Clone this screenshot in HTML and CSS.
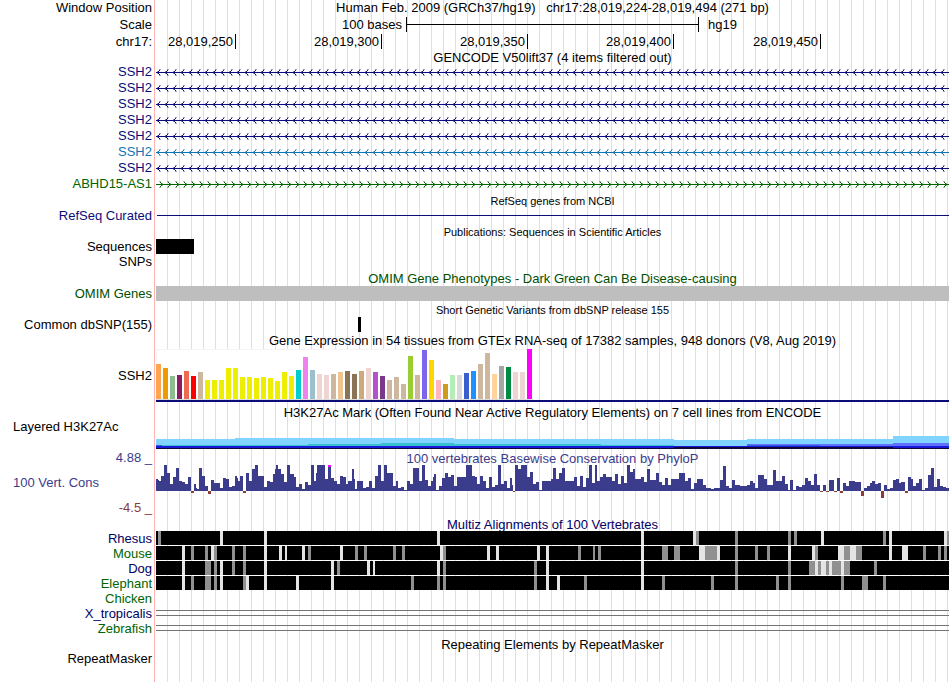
FILE: index.html
```html
<!DOCTYPE html>
<html lang="en">
<head>
<meta charset="utf-8">
<title>Human chr17:28,019,224-28,019,494 genome browser</title>
<link rel="stylesheet" href="styles.css">
</head>
<body>
<svg class="defs" aria-hidden="true">
  <defs>
    <pattern id="minus" width="8" height="16" patternUnits="userSpaceOnUse">
      <path class="strand" d="M0 8h8v1h-8zM2 7h1v1h-1zM2 9h1v1h-1zM3 6h1v1h-1zM3 10h1v1h-1z"/>
      <path class="strand soft" d="M3 5h2v1h-2zM3 11h2v1h-2zM1 7h1v1h-1zM1 9h1v1h-1z"/>
    </pattern>
    <pattern id="minus-alt" width="8" height="16" patternUnits="userSpaceOnUse">
      <path class="strand alt" d="M0 8h8v1h-8zM2 7h1v1h-1zM2 9h1v1h-1zM3 6h1v1h-1zM3 10h1v1h-1z"/>
      <path class="strand alt soft" d="M3 5h2v1h-2zM3 11h2v1h-2zM1 7h1v1h-1zM1 9h1v1h-1z"/>
    </pattern>
    <pattern id="plus" width="8" height="16" patternUnits="userSpaceOnUse">
      <path class="strand green" d="M0 8h8v1h-8zM5 7h1v1h-1zM5 9h1v1h-1zM4 6h1v1h-1zM4 10h1v1h-1z"/>
      <path class="strand green soft" d="M3 5h2v1h-2zM3 11h2v1h-2zM6 7h1v1h-1zM6 9h1v1h-1z"/>
    </pattern>
  </defs>
</svg>
<main class="browser">
  <header class="ruler">
    <div class="row"><div class="label">Window Position</div><h1 class="title">Human Feb. 2009 (GRCh37/hg19)&nbsp;&nbsp; chr17:28,019,224-28,019,494 (271 bp)</h1></div>
    <div class="row"><div class="label">Scale</div>
      <div class="scale"><span class="scale-name">100 bases</span><span class="scale-bar"></span><span class="scale-db">hg19</span></div></div>
    <div class="row"><div class="label">chr17:</div>
      <div class="ticks"><span>28,019,250</span><span>28,019,300</span><span>28,019,350</span><span>28,019,400</span><span>28,019,450</span></div></div>
  </header>

  <section>
    <h2 class="title tight">GENCODE V50lift37 (4 items filtered out)</h2>
    <div class="row navy"><div class="label">SSH2</div><svg class="gene"><rect width="100%" height="16" fill="url(#minus)"/></svg></div>
    <div class="row navy"><div class="label">SSH2</div><svg class="gene"><rect width="100%" height="16" fill="url(#minus)"/></svg></div>
    <div class="row navy"><div class="label">SSH2</div><svg class="gene"><rect width="100%" height="16" fill="url(#minus)"/></svg></div>
    <div class="row navy"><div class="label">SSH2</div><svg class="gene"><rect width="100%" height="16" fill="url(#minus)"/></svg></div>
    <div class="row navy"><div class="label">SSH2</div><svg class="gene"><rect width="100%" height="16" fill="url(#minus)"/></svg></div>
    <div class="row azure"><div class="label">SSH2</div><svg class="gene"><rect width="100%" height="16" fill="url(#minus-alt)"/></svg></div>
    <div class="row navy"><div class="label">SSH2</div><svg class="gene"><rect width="100%" height="16" fill="url(#minus)"/></svg></div>
    <div class="row leaf"><div class="label">ABHD15-AS1</div><svg class="gene"><rect width="100%" height="16" fill="url(#plus)"/></svg></div>
  </section>

  <section>
    <h2 class="title small">RefSeq genes from NCBI</h2>
    <div class="row item navy"><div class="label">RefSeq Curated</div><div class="intron"></div></div>
  </section>

  <section>
    <h2 class="title small">Publications: Sequences in Scientific Articles</h2>
    <div class="row item"><div class="label">Sequences</div><svg class="chart" viewBox="0 0 793 15" preserveAspectRatio="none"><rect width="38" height="15"/></svg></div>
    <div class="row"><div class="label">SNPs</div></div>
  </section>

  <section>
    <h2 class="title forest">OMIM Gene Phenotypes - Dark Green Can Be Disease-causing</h2>
    <div class="row item forest"><div class="label">OMIM Genes</div><div class="omim"></div></div>
  </section>

  <section>
    <h2 class="title small">Short Genetic Variants from dbSNP release 155</h2>
    <div class="row item"><div class="label">Common dbSNP(155)</div><svg class="chart" viewBox="0 0 793 15" preserveAspectRatio="none"><rect x="202" width="3" height="15"/></svg></div>
  </section>

  <section class="gtex">
    <h2 class="title">Gene Expression in 54 tissues from GTEx RNA-seq of 17382 samples, 948 donors (V8, Aug 2019)</h2>
    <div class="row middle"><div class="label">SSH2</div><svg class="chart" id="gtex" viewBox="0 0 793 53" preserveAspectRatio="none"></svg></div>
  </section>

  <section class="row histone">
    <div class="label start">Layered H3K27Ac</div>
    <div>
      <h2 class="title">H3K27Ac Mark (Often Found Near Active Regulatory Elements) on 7 cell lines from ENCODE</h2>
      <svg class="chart" viewBox="0 0 793 13" preserveAspectRatio="none">
        <path fill="#80d4ff" d="M0 3h79v-1h219v1h220v1h73v-1h146v-3h56v12h-793z"/>
        <path fill="#38c0d0" d="M6 9h146v-1h73v-1h73v1h147v1h73v2h-512z"/>
        <path fill="#6070ff" d="M591 8h146v-1h56v4h-202z"/>
        <path fill="#3060e0" d="M0 9h6v1h-6zM445 10h146v-1h73v2h-219z"/>
        <path fill="#1818d8" d="M0 10h793v2h-793z"/>
        <path fill="#100838" d="M0 12h793v1h-793zM518 11h219v1h-219z"/>
      </svg>
    </div>
  </section>

  <section class="row cons indigo">
    <div class="cons-labels">
      <span class="label">4.88 _</span>
      <span class="label start">100 Vert. Cons</span>
      <span class="label maroon">-4.5 _</span>
    </div>
    <div>
      <h2 class="title short">100 vertebrates Basewise Conservation by PhyloP</h2>
      <svg class="chart" id="phylop" viewBox="0 0 793 33" preserveAspectRatio="none"></svg>
    </div>
  </section>

  <section>
    <h2 class="title short deep">Multiz Alignments of 100 Vertebrates</h2>
    <div class="row item deep"><div class="label">Rhesus</div><svg class="chart" id="rhesus" viewBox="0 0 793 15" preserveAspectRatio="none"></svg></div>
    <div class="row item leaf"><div class="label">Mouse</div><svg class="chart" id="mouse" viewBox="0 0 793 15" preserveAspectRatio="none"></svg></div>
    <div class="row item deep"><div class="label">Dog</div><svg class="chart" id="dog" viewBox="0 0 793 15" preserveAspectRatio="none"></svg></div>
    <div class="row item leaf"><div class="label">Elephant</div><svg class="chart" id="elephant" viewBox="0 0 793 15" preserveAspectRatio="none"></svg></div>
    <div class="row item leaf"><div class="label">Chicken</div></div>
    <div class="row item deep"><div class="label">X_tropicalis</div><div class="unaligned"></div></div>
    <div class="row item leaf"><div class="label">Zebrafish</div><div class="unaligned"></div></div>
  </section>

  <section>
    <h2 class="title short">Repeating Elements by RepeatMasker</h2>
    <div class="row item"><div class="label">RepeatMasker</div></div>
  </section>
</main>
<script src="tracks.js"></script>
</body>
</html>
```
FILE: styles.css
```css
* { box-sizing: border-box; }

body {
  margin: 0;
  background: #fff;
  color: #000;
  font: 13px/16px "Liberation Sans", Arial, sans-serif;
}

.defs { position: absolute; width: 0; height: 0; }

.browser {
  min-height: 100vh;
  padding-right: 1px;
  background:
    linear-gradient(#ffb4b4, #ffb4b4) 154px 0 / 1px 100% no-repeat,
    repeating-linear-gradient(to right, transparent 0 11px, #dcdcf8 11px 12px) 156px 0 no-repeat;
}

.row { display: grid; grid-template-columns: 156px minmax(0, 1fr); min-height: 16px; }
.item { min-height: 15px; line-height: 15px; }
.middle { align-items: center; }
.label { padding-right: 4px; text-align: right; white-space: nowrap; }
.label.start { padding-left: 13px; text-align: left; }

/* titles sit low, close to the track beneath */
.title {
  height: 16px;
  margin: 0 0 0 156px;
  font-size: 13px;
  font-weight: 400;
  line-height: 18px;
  text-align: center;
  white-space: nowrap;
}
.row .title { margin-left: 0; }
.ruler .title { line-height: 16px; }
.title.tight { height: 14px; line-height: 16px; }
.title.short { height: 15px; line-height: 17px; }
.title.small { font-size: 11px; }

.chart { display: block; width: 100%; shape-rendering: crispEdges; }
.item .chart { height: 15px; }

.navy { color: #0c0c78; }
.azure { color: #1074b4; }
.leaf { color: #006400; }
.forest { color: #005000; }
.deep { color: #000064; }
.indigo { color: #3c3c8c; }
.maroon { color: #8c3c3c; }

/* coordinate ruler */
.ruler { display: grid; row-gap: 1px; }
.scale { display: grid; grid-template-columns: 250fr 293fr 250fr; }
.scale-name { padding-right: 4px; text-align: right; }
.scale-bar {
  height: 15px;
  border: solid #000;
  border-width: 0 1px;
  background: linear-gradient(#000, #000) 0 7px / 100% 1px no-repeat;
}
.scale-db { padding-left: 9px; }
.ticks { display: grid; grid-template-columns: 80fr 146fr 146fr 146fr 147fr 128fr; }
.ticks span {
  height: 15px;
  padding-right: 2px;
  border-right: 1px solid #000;
  text-align: right;
}
/* gene tracks */
.gene { display: block; width: 100%; height: 16px; shape-rendering: crispEdges; }
.strand { fill: #0c0c78; }
.alt { fill: #1074b4; }
.green { fill: #006400; }
.soft { opacity: .4; }
.intron { height: 1px; margin: 7px 0 0 1px; background: #0c0c78; }
.omim { background: #bebebe; }

/* signal tracks */
.gtex .title { margin-bottom: 1px; }
.gtex .chart { height: 53px; }
.histone { padding: 2px 0 1px; }
.histone .label { padding-top: 15px; }
.histone .chart { height: 13px; margin-top: 16px; }
.cons-labels { display: flex; flex-direction: column; justify-content: space-between; height: 66px; }
.cons .chart { height: 33px; }

/* species without alignable bases */
.unaligned {
  height: 6px;
  margin-top: 4px;
  border: solid #747474;
  border-width: 1px 0;
}
```
FILE: tracks.js
```js
const SVG = "http://www.w3.org/2000/svg";

function rect(svg, x, y, width, height, fill) {
  const node = document.createElementNS(SVG, "rect");
  Object.entries({ x, y, width, height, fill }).forEach(([k, v]) => node.setAttribute(k, v));
  svg.appendChild(node);
}

/* GTEx: one bar per tissue, "height colour" */
const tissues = `35 ffa54f,31 ee9a00,23 8fbc8f,24 8b1c62,28 ee6a50,23 ff0000,27 cdb79e,
19 eeee00,19 eeee00,19 eeee00,31 eeee00,31 eeee00,22 eeee00,22 eeee00,21 eeee00,22 eeee00,
21 eeee00,18 eeee00,27 eeee00,23 eeee00,29 00cdcd,42 ee82ee,29 9ac0cd,25 eed5d2,24 eed5d2,
25 cdb79e,27 eec591,28 8b7355,25 8b7355,28 cdaa7d,31 eed5d2,27 b452cd,23 7a378b,19 cdb79e,
22 cdb79e,15 cdb79e,43 9acd32,24 cdb79e,49 7a67ee,39 ffd700,19 ffb6c1,15 cd9b1d,24 b4eeb4,
24 d9d9d9,26 3a5fcd,28 1e90ff,35 cdb79e,46 cdb79e,25 ffd39b,33 a6a6a6,32 008b45,27 eed5d2,
27 eed5d2,50 ff00ff`;
const gtex = document.getElementById("gtex");
rect(gtex, 0, 0, 377, 50, "#f4f4f4");
rect(gtex, 1, 1, 376, 49, "#fff");
rect(gtex, 0, 50, 377, 1, "#dcdcdc");
tissues.split(",").forEach((entry, i) => {
  const [height, colour] = entry.trim().split(" ");
  rect(gtex, i * 7, 50 - height, 5, +height, "#" + colour);
});
rect(gtex, 0, 51, 793, 2, "#0c0c78");

/* PhyloP: "start:score", each score holds until the next start */
const scores = `0:12,2:11,3:10,5:15,8:26,11:18,14:7,17:14,20:23,23:10,26:9,29:7,32:14,35:-2,38:7,
40:3,41:2,43:23,46:15,49:5,52:-3,55:11,58:8,64:3,67:13,70:12,73:4,76:5,79:15,81:13,82:10,84:15,
87:-2,90:18,93:10,96:22,99:26,102:15,108:4,111:10,114:9,117:17,119:22,120:26,122:22,125:17,128:9,
131:26,134:17,138:14,140:4,143:7,146:2,149:9,152:6,155:26,158:10,160:18,161:26,169:12,172:26,
175:13,178:10,181:7,184:15,187:14,190:7,192:10,196:22,198:12,199:2,201:10,207:3,210:4,213:10,
216:3,219:15,222:26,225:10,228:26,231:18,237:5,240:10,242:3,245:4,248:1,251:10,254:7,257:23,
263:10,266:26,269:11,272:5,275:10,277:14,278:17,280:1,283:5,286:13,289:18,292:14,295:16,298:5,
301:14,310:26,316:15,319:14,321:7,324:15,327:10,330:3,333:14,336:4,339:6,342:26,345:7,348:10,
351:3,354:13,356:6,357:-1,359:26,362:22,365:26,371:14,374:19,377:7,380:9,383:1,386:10,395:12,
397:23,400:12,403:18,406:23,409:10,418:14,421:5,424:15,427:4,430:13,433:26,436:8,439:26,441:10,
444:14,447:17,450:14,456:10,459:17,462:7,465:15,468:8,471:26,474:19,477:22,479:12,485:14,488:9,
491:22,494:11,500:18,503:9,506:6,509:13,512:6,515:12,523:18,529:10,532:13,535:2,538:8,541:12,
547:6,550:3,555:2,558:3,564:11,567:25,570:5,573:3,576:11,579:6,584:5,591:6,594:10,597:8,599:3,
602:16,608:12,611:6,617:21,620:10,626:15,629:7,632:1,634:11,637:1,640:5,643:4,646:6,649:13,
652:10,655:6,658:17,661:6,664:-1,667:6,670:-1,673:11,678:-1,681:13,684:-2,687:8,690:5,693:10,
699:9,705:-5,708:3,711:5,714:8,716:10,719:7,722:8,725:-7,728:6,731:2,734:3,737:11,740:12,743:8,
745:9,749:-2,752:14,755:12,757:5,760:8,763:12,766:1,769:3,772:16,775:23,778:4,781:12,784:5,
787:4,790:3`.split(",").map(s => s.split(":").map(Number));
const phylop = document.getElementById("phylop");
scores.forEach(([x, score], i) => {
  const width = (i + 1 < scores.length ? scores[i + 1][0] : 793) - x;
  if (score > 0) rect(phylop, x, 26 - score, width, score, "#3c3c8c");
  else rect(phylop, x, 26, width, -score, "#8c3c3c");
});
rect(phylop, 172, 0, 3, 2, "#ff00ff");

/* Multiz: "start shade [width]", L for light and G for grey */
const alignments = {
  rhesus: "2G,64L,108L,281L,485L,537L,540G,579G,632G,638G,665L,727G,733L,788L,791G2",
  mouse: "26L,35G,49G,55L,58G,76G,87G,108L,123L,129L2,146L,152G,184L,199G,208G,237G,246G,284L,287G," +
    "331L,340L,381L,390L,422G,437G2,442G,485L,506G6,518G6,543L6,549G12,561L,579G,599G,611G,632L," +
    "656L,659G,682L6,688G6,694L6,700G6,733L,746L6,767G,782G,788G",
  dog: "26L,49G6,58G,64L,76G,87G,108L,175L,181G,211L,217L2,281L,287G,378G,390L,485L,579G,632G," +
    "653G6,659L,662G,665L5,670G,673L,676G9,685L,688G6,718G",
  elephant: "26L,35G,49G6,58G,64L,87G,90L,108L,140L,175L,255G,281G,287G,378G,390L,401L,428G,485L," +
    "506G,555G,579G,620G,632G,685G,706G6,727G"
};
Object.entries(alignments).forEach(([id, marks]) => {
  const svg = document.getElementById(id);
  rect(svg, 0, 0, 793, 14, "#000");
  marks.split(",").forEach(mark => {
    const [, x, shade, width] = mark.match(/(\d+)([LG])(\d*)/);
    rect(svg, +x, 0, +width || 3, 14, shade === "L" ? "#e4e4e4" : "#909090");
  });
});
```
